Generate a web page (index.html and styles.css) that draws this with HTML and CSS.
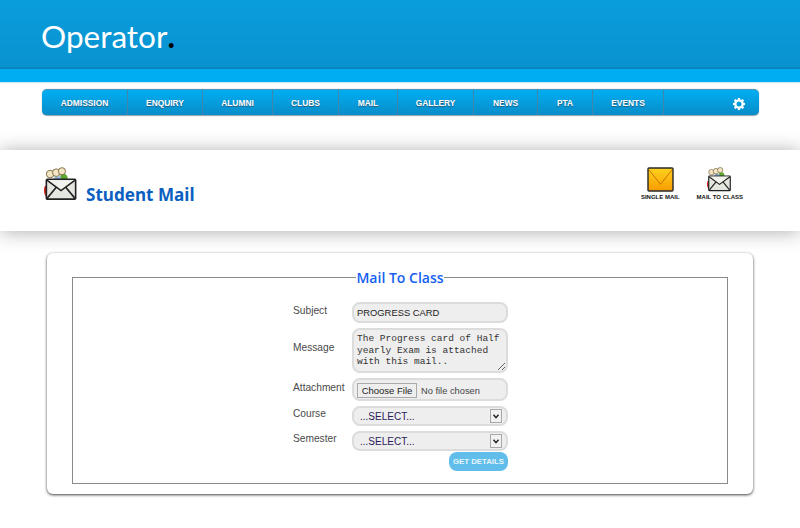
FILE: index.html
```html
<!DOCTYPE html>
<html lang="en">
<head>
<meta charset="utf-8">
<title>Student Mail</title>
<link rel="stylesheet" href="styles.css">
</head>
<body>
<svg class="defs" width="0" height="0" aria-hidden="true">
  <symbol id="group-mail" viewBox="0 0 36 36">
    <path d="M1 20 C-1 24 0 29 2 31 L4 31 L4 19Z" fill="#d8261f"/>
    <path d="M17 10 C18 6 24 6 25 11 L25 14 L17 14Z" fill="#5aa82d"/>
    <path d="M11 10 h7 v5 h-7z" fill="#8fb1d8"/>
    <circle cx="6.500" cy="7.500" r="4" fill="#f4e6c4" stroke="#7b6a45" stroke-width="1"/>
    <circle cx="13" cy="6" r="4" fill="#f4e6c4" stroke="#7b6a45" stroke-width="1"/>
    <circle cx="19" cy="4.500" r="3.800" fill="#f4e6c4" stroke="#7b6a45" stroke-width="1"/>
    <rect x="2.500" y="13" width="31" height="21" rx="1" fill="#e4e6e0" stroke="#222" stroke-width="1.700"/>
    <path d="M3 14 L18 25 L33 14" fill="#f2f3ef" stroke="#222" stroke-width="1.700"/>
    <path d="M3 33.500 L13 21.500 M33 33.500 L23 21.500" fill="none" stroke="#222" stroke-width="1.700"/>
  </symbol>
  <linearGradient id="gold" x1="0" y1="0" x2="0" y2="1">
    <stop offset="0" stop-color="#ffd21f"/>
    <stop offset="1" stop-color="#f79c00"/>
  </linearGradient>
</svg>

<header class="masthead">
  <div class="logo">Operator<span class="logo-dot">.</span></div>
</header>
<div class="band"></div>

<nav class="nav">
  <a class="nav-item">ADMISSION</a>
  <a class="nav-item">ENQUIRY</a>
  <a class="nav-item">ALUMNI</a>
  <a class="nav-item">CLUBS</a>
  <a class="nav-item">MAIL</a>
  <a class="nav-item">GALLERY</a>
  <a class="nav-item">NEWS</a>
  <a class="nav-item">PTA</a>
  <a class="nav-item">EVENTS</a>
  <span class="nav-gear">
    <svg width="12" height="12" viewBox="0 0 24 24" aria-hidden="true"><path fill="#fff" fill-rule="evenodd" d="M10 0h4l.6 3.200 2 .8L19.300 2.200l2.800 2.800L20.300 7.700l.8 2L24 10.200v4l-2.900.5-.8 2 1.800 2.500-2.800 2.800-2.700-1.800-2 .8L14 24h-4l-.6-3-2-.8-2.700 1.800L1.900 19.200l1.800-2.500-.8-2L0 14.200v-4l2.900-.5.800-2L1.900 5l2.800-2.800L7.400 4l2-.8zM12 7.200a5 5 0 1 0 0 10 5 5 0 0 0 0-10z"/></svg>
  </span>
</nav>

<section class="hero">
  <div class="hero-title">
    <svg class="hero-icon" aria-hidden="true"><use href="#group-mail"/></svg>
    <h1>Student Mail</h1>
  </div>
  <div class="hero-actions">
    <a class="action">
      <svg class="action-icon" viewBox="0 0 28 26" aria-hidden="true">
        <rect x="1" y="1" width="26" height="24" rx="1" fill="url(#gold)" stroke="#2a2a2a" stroke-width="1.500"/>
        <path d="M2 3 L14 18 L26 3" fill="none" stroke="#c96f00" stroke-width="1"/>
      </svg>
      <span>SINGLE MAIL</span>
    </a>
    <a class="action">
      <svg class="action-icon" aria-hidden="true"><use href="#group-mail"/></svg>
      <span>MAIL TO CLASS</span>
    </a>
  </div>
</section>

<main class="card">
  <fieldset class="box">
    <legend class="box-title">Mail To Class</legend>
    <form class="form">
      <label class="lbl lbl-subject">Subject</label>
      <input class="field text" type="text" value="PROGRESS CARD">
      <label class="lbl lbl-message">Message</label>
      <textarea class="field area" rows="3">The Progress card of Half yearly Exam is attached with this mail..</textarea>
      <label class="lbl lbl-attach">Attachment</label>
      <div class="field filewrap"><input class="file" type="file"></div>
      <label class="lbl lbl-course">Course</label>
      <div class="field selwrap">
        <select class="sel"><option>...SELECT...</option></select>
        <svg class="arrow" viewBox="0 0 12 14" aria-hidden="true"><path d="M3 5.500 L6 9 L9 5.500" fill="none" stroke="#222" stroke-width="1.800"/></svg>
      </div>
      <label class="lbl lbl-course">Semester</label>
      <div class="field selwrap">
        <select class="sel"><option>...SELECT...</option></select>
        <svg class="arrow" viewBox="0 0 12 14" aria-hidden="true"><path d="M3 5.500 L6 9 L9 5.500" fill="none" stroke="#222" stroke-width="1.800"/></svg>
      </div>
      <div class="submit-row"><button class="submit" type="button">GET DETAILS</button></div>
    </form>
  </fieldset>
</main>
</body>
</html>
```

FILE: styles.css
```css
* { box-sizing: border-box; }
html, body { margin: 0; padding: 0; }
body {
  width: 800px;
  height: 528px;
  overflow: hidden;
  background: #fff;
  font-family: "Liberation Sans", Arial, sans-serif;
}
.defs { display: block; height: 0; }

.masthead {
  height: 69px;
  padding: 15px 0 0 41px;
  background: linear-gradient(#0a9ddc, #0992d0);
  border-bottom: 2px solid #0a83ba;
}
.logo {
  font-family: "Lato", sans-serif;
  font-size: 31.500px;
  line-height: 42px;
  color: #fff;
}
.logo-dot { color: #000; font-weight: 700; }
.band {
  height: 13px;
  background: #00adf2;
  box-shadow: 0 1px 1px #cfeaf7;
}

.nav {
  display: flex;
  align-items: stretch;
  width: 717px;
  height: 27px;
  margin: 7px 0 0 42px;
  background: linear-gradient(#00aef3, #0a8cc8);
  border-radius: 5px;
  border-top: 1px solid #4f93b5;
  border-bottom: 1px solid #9aa9b2;
  box-shadow: 0 0 1px #7c9aab;
}
.nav-item {
  display: flex;
  align-items: center;
  justify-content: center;
  height: 100%;
  font-size: 8.400px;
  font-weight: 700;
  color: #fff;
  text-shadow: 0 1px 1px #2a5a78;
  border-right: 1px solid #3f86ad;
}
.nav-item:nth-child(1) { width: 86px; }
.nav-item:nth-child(2) { width: 75px; }
.nav-item:nth-child(3) { width: 70px; }
.nav-item:nth-child(4) { width: 66px; }
.nav-item:nth-child(5) { width: 59px; }
.nav-item:nth-child(6) { width: 76px; }
.nav-item:nth-child(7) { width: 64px; }
.nav-item:nth-child(8) { width: 55px; }
.nav-item:nth-child(9) { width: 71px; }
.nav-gear {
  flex: 1;
  display: flex;
  align-items: center;
  justify-content: flex-end;
  padding: 2px 14px 0 0;
}

.hero {
  display: flex;
  justify-content: space-between;
  height: 81px;
  margin-top: 34px;
  padding: 17px 57px 0 44px;
  background: #fff;
  box-shadow: 0 1px 18px rgba(0, 0, 0, .32);
}
.hero-title { display: flex; align-items: flex-start; gap: 8px; }
.hero-icon { width: 34px; height: 34px; flex: none; }
.hero-title h1 {
  margin: 17px 0 0;
  font-family: "Noto Sans", sans-serif;
  font-size: 17.100px;
  line-height: 22px;
  font-weight: 700;
  color: #0b5fc0;
}
.hero-actions { display: flex; gap: 17px; }
.action {
  display: flex;
  flex-direction: column;
  align-items: center;
  gap: 1px;
  font-size: 6px;
  font-weight: 700;
  line-height: 8px;
  color: #111;
}
.action-icon { width: 27px; height: 25px; display: block; }

.card {
  width: 706px;
  height: 241px;
  margin: 22px 0 0 47px;
  padding: 15px 25px 10px;
  background: #fff;
  border-radius: 6px;
  box-shadow: 0 1px 3px rgba(0, 0, 0, .75);
}
.box {
  height: 216px;
  margin: 0;
  padding: 0;
  min-width: 0;
  border: 1px solid #8a8a8a;
}
.box-title {
  margin: 0 auto;
  padding: 0;
  font-family: "Open Sans", sans-serif;
  font-weight: 600;
  font-size: 14px;
  line-height: 19px;
  color: #1560f0;
}

.form {
  display: grid;
  grid-template-columns: 59px 156px;
  row-gap: 5px;
  justify-content: start;
  margin: 15px 0 0 220px;
}
.lbl { font-size: 10.200px; line-height: 14px; color: #4a4a4a; }
.lbl-subject { padding-top: 2px; }
.lbl-message { padding-top: 13px; }
.lbl-attach { padding-top: 3px; }
.lbl-course { padding-top: 1px; }
.field {
  display: block;
  width: 156px;
  margin: 0;
  background: #eee;
  border: 2px solid #dcdcdc;
  border-radius: 8px;
  outline: none;
}
.text {
  height: 21px;
  padding: 0 3px;
  font: 9.400px "Liberation Sans", Arial, sans-serif;
  color: #222;
}
.area {
  height: 45px;
  padding: 3px 3px;
  resize: both;
  overflow: hidden;
  font: 9.500px/11.500px "Liberation Mono", "Courier New", monospace;
  color: #333;
}
.filewrap {
  height: 23px;
  padding: 3px 3px;
  overflow: hidden;
}
.file {
  display: block;
  font: 9.300px "Liberation Sans", Arial, sans-serif;
  color: #444;
  width: 148px;
}
.file::file-selector-button {
  font: 9.500px "Liberation Sans", Arial, sans-serif;
  height: 15px;
  width: 60px;
  padding: 0;
  margin-right: 4px;
  color: #222;
  background: #eee;
  border: 1px solid #aaa;
  border-radius: 0;
}
.selwrap { position: relative; height: 20px; }
.sel {
  appearance: none;
  display: block;
  width: 100%;
  height: 16px;
  padding: 0 0 0 6px;
  border: 0;
  background: transparent;
  font: 10px "Liberation Sans", Arial, sans-serif;
  color: #2a1a5a;
}
.arrow {
  position: absolute;
  top: 1px;
  right: 4px;
  width: 12px;
  height: 14px;
  background: #f1f1f1;
  border: 1px solid #a9a9a9;
  pointer-events: none;
}
.submit-row {
  grid-column: 2;
  display: flex;
  justify-content: flex-end;
  margin-top: -4px;
}
.submit {
  width: 59px;
  height: 19px;
  padding: 0;
  border: 0;
  border-radius: 8px;
  background: #61bdea;
  color: #e8f6fc;
  font: 700 7.800px "Liberation Sans", Arial, sans-serif;
}
```
